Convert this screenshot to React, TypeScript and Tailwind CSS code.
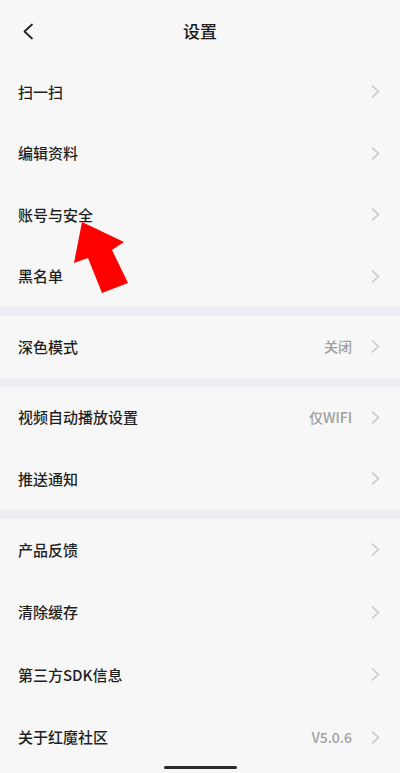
import React from "react"

type Row = { label: string; value?: string }

const sections: { rows: Row[]; h: string }[] = [
  {
    h: "h-[61.5px]",
    rows: [{ label: "扫一扫" }, { label: "编辑资料" }, { label: "账号与安全" }, { label: "黑名单" }],
  },
  { h: "h-[61.5px]", rows: [{ label: "深色模式", value: "关闭" }] },
  {
    h: "h-[61.5px]",
    rows: [{ label: "视频自动播放设置", value: "仅WIFI" }, { label: "推送通知" }],
  },
  {
    h: "h-[62.5px]",
    rows: [
      { label: "产品反馈" },
      { label: "清除缓存" },
      { label: "第三方SDK信息" },
      { label: "关于红魔社区", value: "V5.0.6" },
    ],
  },
]

function Chevron() {
  return (
    <svg width="9" height="13" viewBox="0 0 9 13" fill="none" className="shrink-0">
      <path d="M1.5 1 L7.5 6.5 L1.5 12" stroke="#c4c4c4" strokeWidth="1.4" strokeLinecap="round" strokeLinejoin="round" />
    </svg>
  )
}

function SettingRow({ row, h }: { row: Row; h: string }) {
  return (
    <div className={`flex items-center pl-[18px] pr-[20px] ${h}`}>
      <span className="flex-1 text-[15px] font-medium text-[#1f1f1f]">{row.label}</span>
      {row.value && <span className="mr-[19px] text-[14px] font-medium text-[#a0a0a0]">{row.value}</span>}
      <Chevron />
    </div>
  )
}

export default function App() {
  return (
    <div
      className="relative h-[773px] w-[400px] overflow-hidden bg-[#f7f7f7]"
      style={{ fontFamily: '"Noto Sans CJK SC", "Noto Sans", sans-serif' }}
    >
      <header className="relative flex h-[61px] items-center justify-center">
        <svg width="12" height="17" viewBox="0 0 12 17" fill="none" className="absolute left-[22px] top-[23px]">
          <path d="M10 1.5 L2.5 8.5 L10 15.5" stroke="#222" strokeWidth="1.8" strokeLinecap="round" strokeLinejoin="round" />
        </svg>
        <h1 className="text-[17px] font-medium text-[#1a1a1a]">设置</h1>
      </header>

      {sections.map((s, i) => (
        <div key={i}>
          {i > 0 && <div className="h-[9px] bg-[#eeeef2]" />}
          {s.rows.map((r) => (
            <SettingRow key={r.label} row={r} h={s.h} />
          ))}
        </div>
      ))}

      {/* annotation arrow */}
      <svg className="pointer-events-none absolute left-0 top-0" width="400" height="773" viewBox="0 0 400 773">
        <polygon points="82,222 124,242 112,250 128,283 102,293 88,258 74,263" fill="#ff0000" />
      </svg>

      <div className="absolute bottom-[4px] left-[164px] h-[3px] w-[73px] rounded-full bg-[#2a2a2a]" />
    </div>
  )
}
